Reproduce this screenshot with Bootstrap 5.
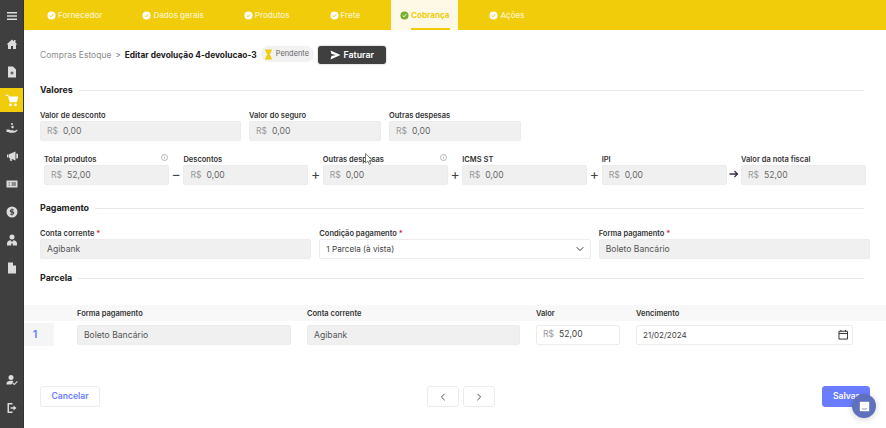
<!doctype html>
<html lang="pt-BR">
<head>
<meta charset="utf-8">
<meta name="viewport" content="width=device-width, initial-scale=1">
<title>Editar devolução</title>
<link href="https://cdn.jsdelivr.net/npm/bootstrap@5.3.5/dist/css/bootstrap.min.css" rel="stylesheet">
<style>
  html, body { height: 428px; overflow: hidden; }
  body { font-family: Inter, "Open Sans", sans-serif; font-size: 10px; color: #212529; background: #fff; }
  .app-shell { height: 428px; }

  .side-bar { width: 24px; flex: none; background: #3f3f3f; border-right: 1px solid #333; padding: 2px 0 6px; }
  .side-item { height: 28px; display: flex; align-items: center; justify-content: center; color: #dcdcdc; }
  .side-item svg { width: 12px; height: 12px; fill: currentColor; }
  .side-item.on { background: linear-gradient(#3f3f3f 2px, #f0cc0a 2px, #f0cc0a 26px, #3f3f3f 26px); color: #fff; }
  .side-item.on svg { width: 14px; height: 14px; }

  .main-area { position: relative; min-width: 0; }

  .tab-bar { height: 30px; background: #f0cc0a; padding-left: 14px; gap: 22px; }
  .tab-item { position: relative; padding: 0 9px; gap: 2px; color: #fdf5c8; font-size: 8.05px; font-weight: 500; line-height: 30px; }
  .tab-item svg { width: 9px; height: 9px; flex: none; }
  .tab-item.on { background: #fdf9e6; color: #f0cc0a; font-weight: 700; }
  .tab-item.on::after { content: ""; position: absolute; left: 20px; right: 8px; bottom: 0; height: 2px; background: #f0cc0a; }

  .page-body { padding: 16px 16px 0; }
  .crumb-row { height: 18px; gap: 4px; }
  .crumb-link { color: #8c8c8c; font-size: 8.5px; }
  .crumb-sep { color: #666; font-size: 8px; }
  .crumb-now { font-weight: 700; font-size: 8.4px; color: #222; }
  .status-pill { height: 16px; width: 53px; border-radius: 8px; background: #f2f2f2; color: #666; font-size: 7.4px; gap: 3px; padding-left: 3px; margin-top: -2px; }
  .status-pill svg { width: 9px; height: 11px; flex: none; }
  .bill-btn { height: 18px; width: 68px; background: #3f3f3f; color: #fff; border: 0; border-radius: 3px; font-size: 8.8px; font-weight: 600; gap: 3px; padding: 0; box-shadow: 0 0 2px rgba(0,0,0,.35); }
  .bill-btn:hover { background: #3f3f3f; color: #fff; }
  .bill-btn svg { width: 11px; height: 10px; fill: #fff; }

  .sect-title { height: 14px; margin-right: 6px; gap: 6px; font-size: 8.9px; font-weight: 700; color: #222; }
  .sect-title::after { content: ""; flex: 1; height: 1px; background: #e8e8e8; }

  .fld-label { display: flex; justify-content: space-between; align-items: center; height: 12px; margin: 0; padding-top: 1px; font-size: 7.5px; font-weight: 600; color: #333; white-space: nowrap; }
  .fld-label b { color: #e01b3c; font-weight: 600; }
  .info-mark { width: 7px; height: 7px; margin: -4px 1px 0 0; flex: none; }

  .form-control.cell-input, .form-select.cell-input { height: 20px; min-height: 0; padding: 0 6px; font-size: 8.6px; line-height: 18px; color: #555; border: 1px solid #ececec; border-radius: 2px; box-shadow: none; }
  .form-select.cell-input { color: #444; font-size: 8.2px; background-size: 8px 8px; background-position: right 6px center; padding-right: 20px; }
  .cell-input[readonly] { background-color: #f0f0f0; }
  .money-box { height: 20px; flex-wrap: nowrap; border: 1px solid #ececec; border-radius: 2px; background: #f0f0f0; align-items: center; padding-left: 6px; }
  .money-box.live { background: #fff; }
  .money-box span { color: #999; font-size: 8.6px; margin-right: 5px; }
  .money-box input { border: 0; background: transparent; outline: 0; padding: 0; min-width: 0; width: 100%; font-size: 8.6px; color: #666; }
  .money-box.live input { color: #444; }
  .money-box input.date-val { font-size: 8px; }

  .row-first { display: grid; grid-template-columns: 201px 132px 132px; gap: 8px; margin-top: 12px; }
  .row-totals { margin: 12px 4px 0; }
  .row-totals > div:not(.op-mark) { flex: 1 1 0; min-width: 0; }
  .op-mark { width: 14.4px; flex: none; height: 20px; padding-bottom: 3px; align-self: flex-end; display: flex; align-items: center; justify-content: center; font-size: 14px; color: #444; }
  .op-mark svg { width: 10px; height: 8px; }
  .row-pay { display: grid; grid-template-columns: repeat(3, 1fr); gap: 8px; margin-top: 12px; }

  .parcel-grid { display: grid; grid-template-columns: 37px 214px 213px 84px 217px; column-gap: 16px; align-items: center; }
  .parcel-head { height: 16px; margin-top: 20px; background: #f8f8f8; }
  .parcel-line { margin-top: 2px; height: 23px; }
  .parcel-no { width: 30px; height: 23px; background: #f5f5f5; color: #6a7dff; font-size: 11px; font-weight: 600; display: flex; align-items: center; justify-content: center; padding-right: 8px; }

  .foot-row { padding: 40px 16px 0; }
  .foot-btn { height: 21px; padding: 0; border: 1px solid #ececec; border-radius: 3px; background: #fff; font-size: 8.6px; font-weight: 600; color: #6a7dff; display: flex; align-items: center; justify-content: center; }
  .foot-btn svg { width: 8px; height: 8px; }
  .save-btn { width: 48px; background: #6a7dff; border-color: #6a7dff; color: #fff; }

  .chat-bubble { position: absolute; left: 828px; top: 394px; width: 24px; height: 24px; border-radius: 50%; background: #5f70bd; display: flex; align-items: center; justify-content: center; box-shadow: 0 1px 6px rgba(0,0,0,.2); }
  .chat-bubble svg { width: 11px; height: 11px; }
  .mouse-arrow { position: absolute; left: 341px; top: 153px; width: 8px; height: 12px; }
</style>
</head>
<body>
<div class="app-shell d-flex">
  <aside class="side-bar d-flex flex-column">
    <div class="side-item"><svg viewBox="0 0 24 24"><path d="M2 4h20v3H2zM2 10.500h20v3H2zM2 17h20v3H2z"/></svg></div>
    <div class="side-item"><svg viewBox="0 0 24 24"><path d="M12 3 1 13h3v9h6v-6h4v6h6v-9h3l-4-3.600V4h-3v2.700z"/></svg></div>
    <div class="side-item"><svg viewBox="0 0 24 24"><path fill-rule="evenodd" d="M4 1h10l6 6v16H4zM11 11v2H9v2h2v2h2v-2h2v-2h-2v-2z"/></svg></div>
    <div class="side-item on"><svg viewBox="0 0 24 24"><path d="M1 3h4.500l.8 3H23l-3 10H8.500L5 5H1z"/><circle cx="9.500" cy="20.500" r="2.300"/><circle cx="18" cy="20.500" r="2.300"/></svg></div>
    <div class="side-item"><svg viewBox="0 0 24 24"><circle cx="12" cy="4" r="2"/><circle cx="13" cy="10" r="2.500"/><path d="M1 15h5l3 1.500h6l1 2 5-3h2c0 2-4 6-8 6H7l-2-1.500H1z"/></svg></div>
    <div class="side-item"><svg viewBox="0 0 24 24"><path d="M2 9h3v6H2zM6 8.500 19 3v18L6 15.500zM20.500 7a5 5 0 0 1 0 10zM7 17h4l1 5H9z"/></svg></div>
    <div class="side-item"><svg viewBox="0 0 24 24"><path fill-rule="evenodd" d="M1 5h22v14H1zM5 9h3v1.500H5zM5 13.500h3V15H5zM11 9h9v2h-9zM11 13h9v2h-9z"/></svg></div>
    <div class="side-item"><svg viewBox="0 0 24 24"><path fill-rule="evenodd" d="M12 1a11 11 0 1 1 0 22 11 11 0 0 1 0-22zM11 5v1.600c-2 .4-3.200 1.700-3.200 3.300 0 2 1.600 2.800 3.200 3.200v3a3 3 0 0 1-2.400-1.300l-1.400 1.200A4.800 4.800 0 0 0 11 17.400V19h2v-1.600c2-.4 3.300-1.700 3.300-3.500 0-2-1.600-2.800-3.300-3.200V7.800c.8.200 1.400.6 1.900 1.200l1.400-1.200A4.700 4.700 0 0 0 13 6.600V5zm0 2.800v2.500c-.8-.3-1.300-.6-1.300-1.300s.5-1 1.300-1.200zm2 5.500c.9.300 1.400.7 1.400 1.300 0 .7-.6 1.100-1.400 1.300z"/></svg></div>
    <div class="side-item"><svg viewBox="0 0 24 24"><circle cx="12" cy="6" r="5"/><path d="M2 23v-4c0-4 3-6 7-6.500L12 16l3-3.500c4 .5 7 2.500 7 6.500v4H13.500v-4h-3v4z"/></svg></div>
    <div class="side-item"><svg viewBox="0 0 24 24"><path d="M4 1h10l6 6v16H4zM14 1v6h6z"/></svg></div>
    <div class="side-item mt-auto"><svg viewBox="0 0 24 24"><circle cx="10" cy="7" r="5"/><path d="M1 21v-2c0-3.500 3-5.500 9-5.500 2 0 3.500.2 4.800.7L11 21zM14 17l2.500 2.500L22 14l1.500 1.500-7 7-4-4z"/></svg></div>
    <div class="side-item"><svg viewBox="0 0 24 24"><path d="M3 2h10v3H6v14h7v3H3zM15 7l6 5-6 5v-3.500H9v-3h6z"/></svg></div>
  </aside>

  <div class="main-area flex-grow-1">
    <nav class="tab-bar d-flex">
      <div class="tab-item d-flex align-items-center"><svg viewBox="0 0 20 20"><circle cx="10" cy="10" r="9" fill="#fff"/><path d="m6 10 3 3 5-6" fill="none" stroke="#f0cc0a" stroke-width="2.200"/></svg>Fornecedor</div>
      <div class="tab-item d-flex align-items-center"><svg viewBox="0 0 20 20"><circle cx="10" cy="10" r="9" fill="#fff"/><path d="m6 10 3 3 5-6" fill="none" stroke="#f0cc0a" stroke-width="2.200"/></svg>Dados gerais</div>
      <div class="tab-item d-flex align-items-center"><svg viewBox="0 0 20 20"><circle cx="10" cy="10" r="9" fill="#fff"/><path d="m6 10 3 3 5-6" fill="none" stroke="#f0cc0a" stroke-width="2.200"/></svg>Produtos</div>
      <div class="tab-item d-flex align-items-center"><svg viewBox="0 0 20 20"><circle cx="10" cy="10" r="9" fill="#fff"/><path d="m6 10 3 3 5-6" fill="none" stroke="#f0cc0a" stroke-width="2.200"/></svg>Frete</div>
      <div class="tab-item on d-flex align-items-center"><svg viewBox="0 0 20 20"><circle cx="10" cy="10" r="9" fill="#78ae2c"/><path d="m6 10 3 3 5-6" fill="none" stroke="#fff" stroke-width="2.200"/></svg>Cobrança</div>
      <div class="tab-item d-flex align-items-center"><svg viewBox="0 0 20 20"><circle cx="10" cy="10" r="9" fill="#fff"/><path d="m6 10 3 3 5-6" fill="none" stroke="#f0cc0a" stroke-width="2.200"/></svg>Ações</div>
    </nav>

    <div class="page-body">
      <div class="crumb-row d-flex align-items-center">
        <span class="crumb-link">Compras Estoque</span>
        <span class="crumb-sep">&gt;</span>
        <span class="crumb-now">Editar devolução 4-devolucao-3</span>
        <span class="status-pill d-flex align-items-center"><svg viewBox="0 0 18 22"><path d="M2 1h14v2.500h-1.500c0 4-2 5.500-3.500 7.500 1.500 2 3.500 3.500 3.500 7.500H16V21H2v-2.500h1.500c0-4 2-5.500 3.500-7.500C5.500 9 3.500 7.500 3.500 3.500H2z" fill="#f0cc0a"/></svg>Pendente</span>
        <button class="bill-btn btn d-flex align-items-center justify-content-center"><svg viewBox="0 0 22 20"><path d="M1 1 21 10 1 19l2-7 9-2-9-2z"/></svg>Faturar</button>
      </div>

      <div class="sect-title d-flex align-items-center" style="margin-top:19px">Valores</div>
      <div class="row-first">
        <div><label class="fld-label">Valor de desconto</label><div class="money-box d-flex"><span>R$</span><input readonly value="0,00"></div></div>
        <div><label class="fld-label">Valor do seguro</label><div class="money-box d-flex"><span>R$</span><input readonly value="0,00"></div></div>
        <div><label class="fld-label">Outras despesas</label><div class="money-box d-flex"><span>R$</span><input readonly value="0,00"></div></div>
      </div>

      <div class="row-totals d-flex">
        <div><label class="fld-label">Total produtos<svg class="info-mark" viewBox="0 0 14 14"><circle cx="7" cy="7" r="6" fill="none" stroke="#777"/><path d="M7 6v4M7 3.500v1.200" stroke="#777"/></svg></label><div class="money-box d-flex"><span>R$</span><input readonly value="52,00"></div></div>
        <div class="op-mark">&minus;</div>
        <div><label class="fld-label">Descontos</label><div class="money-box d-flex"><span>R$</span><input readonly value="0,00"></div></div>
        <div class="op-mark">+</div>
        <div><label class="fld-label">Outras despesas<svg class="info-mark" viewBox="0 0 14 14"><circle cx="7" cy="7" r="6" fill="none" stroke="#777"/><path d="M7 6v4M7 3.500v1.200" stroke="#777"/></svg></label><div class="money-box d-flex"><span>R$</span><input readonly value="0,00"></div></div>
        <div class="op-mark">+</div>
        <div><label class="fld-label">ICMS ST</label><div class="money-box d-flex"><span>R$</span><input readonly value="0,00"></div></div>
        <div class="op-mark">+</div>
        <div><label class="fld-label">IPI</label><div class="money-box d-flex"><span>R$</span><input readonly value="0,00"></div></div>
        <div class="op-mark"><svg viewBox="0 0 20 16"><path d="M1 8h15M11 2l6 6-6 6" fill="none" stroke="#3d2f4a" stroke-width="2.600"/></svg></div>
        <div><label class="fld-label">Valor da nota fiscal</label><div class="money-box d-flex"><span>R$</span><input readonly value="52,00"></div></div>
      </div>

      <div class="sect-title d-flex align-items-center" style="margin-top:16px">Pagamento</div>
      <div class="row-pay">
        <div><label class="fld-label justify-content-start">Conta corrente&nbsp;<b>*</b></label><input class="form-control cell-input" readonly value="Agibank"></div>
        <div><label class="fld-label justify-content-start">Condição pagamento&nbsp;<b>*</b></label><select class="form-select cell-input"><option>1 Parcela (à vista)</option></select></div>
        <div><label class="fld-label justify-content-start">Forma pagamento&nbsp;<b>*</b></label><input class="form-control cell-input" readonly value="Boleto Bancário"></div>
      </div>

      <div class="sect-title d-flex align-items-center" style="margin-top:12px">Parcela</div>
    </div>

    <div class="parcel-grid parcel-head">
      <span></span>
      <label class="fld-label">Forma pagamento</label>
      <label class="fld-label">Conta corrente</label>
      <label class="fld-label">Valor</label>
      <label class="fld-label">Vencimento</label>
    </div>
    <div class="parcel-grid parcel-line">
      <div class="parcel-no">1</div>
      <input class="form-control cell-input" readonly value="Boleto Bancário">
      <input class="form-control cell-input" readonly value="Agibank">
      <div class="money-box live d-flex"><span>R$</span><input value="52,00"></div>
      <div class="money-box live d-flex justify-content-between pe-1"><input class="date-val" value="21/02/2024"><svg width="11" height="11" viewBox="0 0 16 16" class="flex-none"><path d="M1.500 3h13v12h-13zM1.500 6.500h13M4.500 1v3M11.500 1v3" fill="none" stroke="#333" stroke-width="1.500"/></svg></div>
    </div>

    <div class="foot-row d-flex justify-content-between">
      <button class="foot-btn" style="width:60px">Cancelar</button>
      <div class="d-flex gap-1">
        <button class="foot-btn" style="width:32px"><svg viewBox="0 0 10 10"><path d="M7 1 3 5l4 4" fill="none" stroke="#444" stroke-width="1.200"/></svg></button>
        <button class="foot-btn" style="width:32px"><svg viewBox="0 0 10 10"><path d="m3 1 4 4-4 4" fill="none" stroke="#444" stroke-width="1.200"/></svg></button>
      </div>
      <button class="foot-btn save-btn">Salvar</button>
    </div>

    <div class="chat-bubble"><svg viewBox="0 0 14 14"><path d="M2 1h10a1 1 0 0 1 1 1v11H2a1 1 0 0 1-1-1V2a1 1 0 0 1 1-1z" fill="#fff"/><path d="M4 9.500c2 1.200 4 1.200 6 0" fill="none" stroke="#5f70bd"/></svg></div>
    <svg class="mouse-arrow" viewBox="0 0 8 12"><path d="M.5.500v9.500l2.300-2 1.500 3.500 1.500-.7-1.500-3.300h3z" fill="#fff" stroke="#555" stroke-width=".7"/></svg>
  </div>
</div>
<script src="https://cdn.jsdelivr.net/npm/bootstrap@5.3.5/dist/js/bootstrap.bundle.min.js"></script>
</body>
</html>
